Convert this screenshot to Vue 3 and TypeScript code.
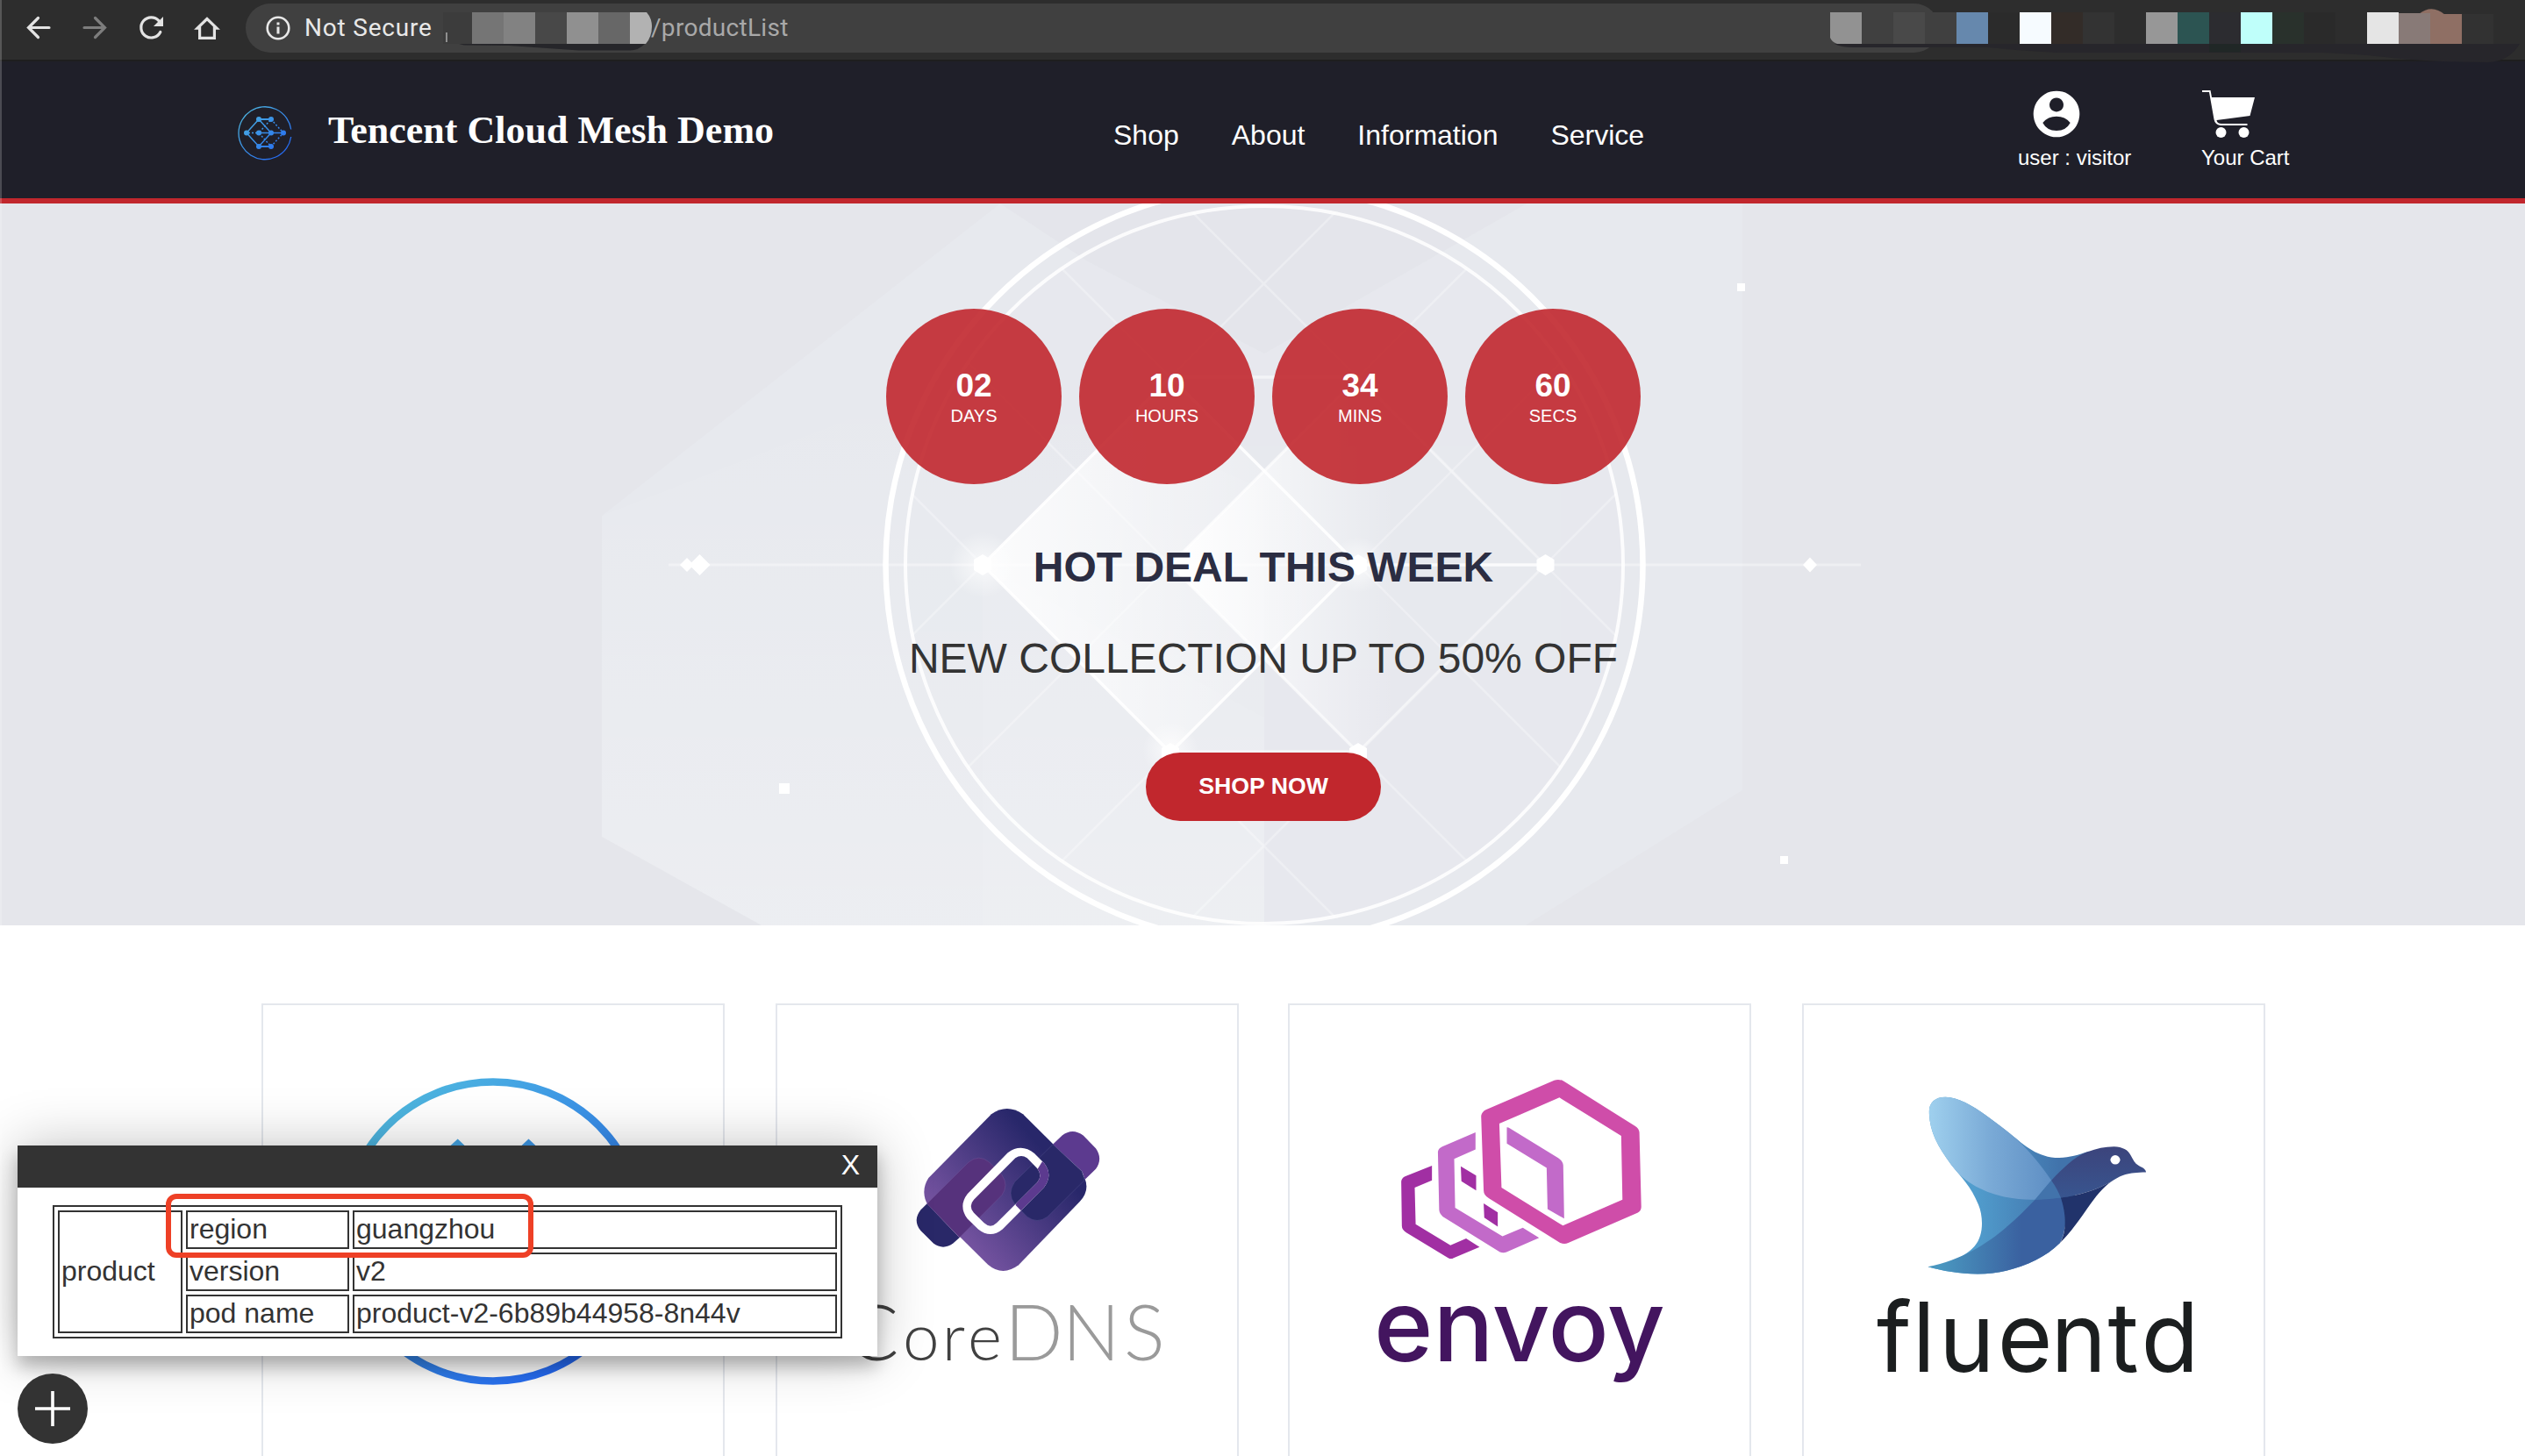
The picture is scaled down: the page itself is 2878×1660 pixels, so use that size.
<script setup lang="ts">
interface Swatch { x: number; color: string; y?: number }
interface Unit { value: string; label: string }

const addressMosaic: Swatch[] = [
  { x: 0, color: '#3c3c3c' },
  { x: 33, color: '#757575' },
  { x: 69, color: '#828282' },
  { x: 105, color: '#484848' },
  { x: 141, color: '#909090' },
  { x: 177, color: '#676767' },
]

const toolbarMosaic: Swatch[] = [
  { x: 108, color: '#404040' },
  { x: 72, color: '#494949' },
  { x: 144, color: '#6688ad' },
  { x: 180, color: '#2b2b2b' },
  { x: 216, color: '#f6fbff' },
  { x: 252, color: '#332c28' },
  { x: 288, color: '#333333' },
  { x: 360, color: '#979797' },
  { x: 396, color: '#2c5452' },
  { x: 432, color: '#2c2c30' },
  { x: 468, color: '#bffffa' },
  { x: 504, color: '#29312c' },
  { x: 540, color: '#2a2a2a' },
  { x: 612, color: '#e5e5e5' },
  { x: 648, color: '#887a77', y: 15 },
  { x: 684, color: '#8f6f64', y: 16 },
  { x: 720, color: '#323232', y: 16 },
]

const links: string[] = ['Shop', 'About', 'Information', 'Service']

const countdown: Unit[] = [
  { value: '02', label: 'DAYS' },
  { value: '10', label: 'HOURS' },
  { value: '34', label: 'MINS' },
  { value: '60', label: 'SECS' },
]

const gridNodes: number[] = [1120, 1334, 1548, 1761]
</script>

<template>
  <div class="screen">
    <div class="toolbar">
      <svg class="tool-icons" viewBox="0 0 280 68">
        <g fill="none" stroke-width="3.2" stroke-linecap="round">
          <path d="M56 31.5H33M43.5 20.5L32.5 31.5L43.5 42.5" stroke="#e3e3e3" />
          <path d="M96 31.5H119M108.5 20.5L119.5 31.5L108.5 42.5" stroke="#7d7d7d" />
          <path d="M181 23.6A11.6 11.6 0 1 0 182.8 36.5" stroke="#e3e3e3" />
          <path d="M236 21.5L225 32.2H227.6V43.4H244.4V32.2H247Z" stroke="#e3e3e3" stroke-linejoin="miter" />
        </g>
        <path d="M186 19V30H175Z" fill="#e3e3e3" />
      </svg>
      <div class="address">
        <svg class="info" viewBox="0 0 28 28">
          <circle cx="14" cy="14" r="12.3" fill="none" stroke="#e8e8e8" stroke-width="2.6" />
          <path d="M14 12.5V20.6M14 7.6V10.4" stroke="#e8e8e8" stroke-width="3" />
        </svg>
        <span class="not-secure">Not Secure</span>
        <svg class="mosaic" viewBox="0 0 240 56">
          <rect v-for="s in addressMosaic" :key="s.x" :x="s.x" y="10" width="36" height="36" :fill="s.color" />
          <path d="M4 33V44" stroke="#8f8f8f" stroke-width="2" />
          <path d="M213 10H232Q238 17 238 26Q238 38 231 46H213Z" fill="#b2b2b2" />
          <path d="M18 46H230Q222 54 212 53.500H155L75 48L24 47.500Z" fill="#26262a" />
        </svg>
        <span class="path">/productList</span>
      </div>
      <svg class="extensions" viewBox="0 0 792 72">
        <path d="M5 50Q12 54 26 54H180Q220 58 258 60H560Q610 62 640 66Q690 71 750 71Q774 70 786 50Z" fill="#27262b" />
        <rect x="432" y="50" width="36" height="9.500" fill="#202726" />
        <path d="M0 14H36V50H8Q2 48 0 43Z" fill="#929292" />
        <path d="M671 16Q686 4 701 17Z" fill="#8f6f64" />
        <rect v-for="s in toolbarMosaic" :key="s.x" :x="s.x" :y="s.y ?? 14" width="36" :height="50 - (s.y ?? 14)" :fill="s.color" />
      </svg>
    </div>

    <header class="site-header">
      <div class="brand">
        <svg class="brand-logo" viewBox="0 0 62 62">
          <defs>
            <linearGradient id="mesh-small" gradientUnits="userSpaceOnUse" x1="6" y1="6" x2="54" y2="54">
              <stop offset="0" stop-color="#4db4df" /><stop offset="1" stop-color="#2468f2" />
            </linearGradient>
          </defs>
          <g fill="none" stroke="url(#mesh-small)">
            <path d="M60.700 26.500A30 30 0 1 0 60.700 35" stroke-width="1.300" />
            <path d="M24 15.010L38 15M24 46.010L38 46" stroke-width="2" />
            <path d="M24 15L10 30.500L24 46L38 30.500ZM24 30.510L52 30.500" stroke-width="1.500" />
            <path d="M12 30.600L24 30.500M38 15L52 30.500L38 46L24 30.500Z" stroke-width="1.500" stroke-dasharray="2 2" />
          </g>
          <g fill="url(#mesh-small)">
            <circle cx="24" cy="15" r="3" /><circle cx="38" cy="15" r="3" />
            <circle cx="10" cy="30.500" r="3" /><circle cx="24" cy="30.500" r="3" />
            <circle cx="38" cy="30.500" r="3" /><circle cx="52" cy="30.500" r="3" />
            <circle cx="24" cy="46" r="3" /><circle cx="38" cy="46" r="3" />
          </g>
        </svg>
        <span class="brand-name">Tencent Cloud Mesh Demo</span>
      </div>
      <nav class="links">
        <a v-for="l in links" :key="l">{{ l }}</a>
      </nav>
      <div class="account">
        <div class="account-item user">
          <svg viewBox="0 0 60 60">
            <path fill-rule="evenodd" fill="#fff" d="M44 3.700A26.300 26.300 0 1 0 44.010 3.700ZM44 11.400A8 8 0 1 1 43.990 11.400ZM28.300 40Q34 32.700 44 32.700T59.700 40Q55 49 44 49T28.300 40Z" />
          </svg>
          <span>user : visitor</span>
        </div>
        <div class="account-item cart">
          <svg viewBox="0 0 62 60">
            <g fill="#fff">
              <path d="M1 3H10.500L12 11H61L55.500 32L17.500 37Q18 41 23 41H52.500V43H22Q15.500 42 14.500 36L9 5H1Z" />
              <circle cx="22.500" cy="51" r="6" /><circle cx="48.500" cy="51" r="6" />
            </g>
          </svg>
          <span>Your Cart</span>
        </div>
      </div>
    </header>

    <section class="hero">
      <svg class="hero-art" viewBox="0 234 2878 823">
        <defs>
          <clipPath id="ring-clip"><circle cx="1441" cy="646" r="409" /></clipPath>
          <linearGradient id="fade-left"><stop offset="0" stop-color="#fff" stop-opacity=".85" /><stop offset=".8" stop-color="#fff" stop-opacity=".15" /></linearGradient>
          <linearGradient id="fade-right"><stop offset="0" stop-color="#fff" stop-opacity=".95" /><stop offset=".6" stop-color="#fff" stop-opacity="0" /></linearGradient>
          <linearGradient id="edge-right" gradientUnits="userSpaceOnUse" x1="1334" y1="0" x2="1761" y2="0"><stop offset="0" stop-color="#fff" /><stop offset="1" stop-color="#fff" stop-opacity=".25" /></linearGradient>
          <linearGradient id="facet" x1="0" y1="0" x2="0" y2="1"><stop offset="0" stop-color="#fff" stop-opacity="0" /><stop offset="1" stop-color="#fff" stop-opacity=".22" /></linearGradient>
          <radialGradient id="glow"><stop offset="0" stop-color="#fff" stop-opacity=".7" /><stop offset="1" stop-color="#fff" stop-opacity="0" /></radialGradient>
        </defs>
        <path d="M686 590L1140 234H1740L1986 234V903L1739 1057H868L686 956Z" fill="#f1f3f9" opacity=".2" />
        <path d="M686 590L1120 420L1441 560V1057H868L686 956Z" fill="url(#facet)" />
        <path d="M1120 646L1441 820V1057H1120Z" fill="#fff" opacity=".07" />
        <path d="M1140 234L1240 300L1441 405L1740 234Z" fill="#e0e1e6" opacity=".45" />
        <path d="M762 646H2121" stroke="#fff" stroke-width="3" opacity=".38" />
        <g clip-path="url(#ring-clip)" stroke="#fff" stroke-width="2.500" opacity=".3">
          <path v-for="n in gridNodes" :key="n" :d="`M${n - 450} 196L${n + 450} 1096M${n - 450} 1096L${n + 450} 196`" />
        </g>
        <path d="M1120 646L1334 432L1548 646L1334 860Z" fill="url(#fade-left)" />
        <path d="M1334 646L1548 432L1761 646L1548 860Z" fill="url(#fade-right)" />
        <g fill="none" stroke="#fff" stroke-width="3.500">
          <path d="M1120 646L1334 432L1548 646L1334 860Z" opacity=".85" />
          <path d="M1334 646L1548 432L1761 646L1548 860Z" stroke="url(#edge-right)" opacity=".7" />
          <path d="M1334 432H1548M1334 859H1548" opacity=".5" />
          <path d="M1548 646H1761" opacity=".7" />
        </g>
        <circle cx="1120" cy="646" r="38" fill="url(#glow)" />
        <circle cx="1334" cy="857" r="32" fill="url(#glow)" />
        <circle cx="1548" cy="646" r="32" fill="url(#glow)" />
        <g fill="#fff">
          <path d="M783 638L791 646L783 654L775 646ZM797.500 634L809.500 646L797.500 658L785.500 646ZM2063 637.500L2071 646L2063 654.500L2055 646Z" />
          <path d="M1120 634L1130 640V652L1120 658L1110 652V640ZM1761.500 634L1771.500 640V652L1761.500 658L1751.500 652V640ZM1548 634L1558 640V652L1548 658L1538 652V640ZM1548 849L1558 855V867H1538V855ZM1334 849L1344 855V867H1324V855Z" />
          <rect x="888" y="895" width="12" height="12" /><rect x="1980" y="325" width="9" height="9" /><rect x="2029" y="978" width="9" height="9" />
        </g>
        <g fill="none" stroke="#fff">
          <circle cx="1441" cy="646" r="431.500" stroke-width="6.500" />
          <circle cx="1441" cy="646" r="409" stroke-width="4" opacity=".85" />
        </g>
      </svg>
      <div class="hero-content">
        <div class="countdown">
          <div v-for="u in countdown" :key="u.label" class="unit">
            <strong>{{ u.value }}</strong>
            <small>{{ u.label }}</small>
          </div>
        </div>
        <h2>HOT DEAL THIS WEEK</h2>
        <p>NEW COLLECTION UP TO 50% OFF</p>
        <a class="shop-now">SHOP NOW</a>
      </div>
    </section>

    <main class="products">
      <article class="card">
        <svg viewBox="300 1146 524 514">
          <defs>
            <linearGradient id="mesh-big" gradientUnits="userSpaceOnUse" x1="440" y1="1285" x2="680" y2="1525">
              <stop offset="0" stop-color="#4db4df" /><stop offset="1" stop-color="#2468f2" />
            </linearGradient>
          </defs>
          <circle cx="562" cy="1404" r="170.500" fill="none" stroke="url(#mesh-big)" stroke-width="8.600" />
          <path d="M521.700 1298.500L539 1315L521.700 1332L504 1315ZM602.500 1298.500L620 1315L602.500 1332L585 1315Z" fill="url(#mesh-big)" />
        </svg>
      </article>

      <article class="card">
        <svg viewBox="-222 47.300 1572 1520.700" preserveAspectRatio="none">
          <defs>
            <linearGradient id="dns-body" gradientUnits="userSpaceOnUse" x1="390" y1="800" x2="690" y2="540">
              <stop offset="0" stop-color="#73529f" /><stop offset="1" stop-color="#28276a" />
            </linearGradient>
            <clipPath id="dns-link"><path d="M720 517L850 640L702 761Q667 786 632 761L592 721Z" /></clipPath>
          </defs>
          <path d="M295 630L510 415Q563 378 618 415L815 608Q857 662 812 710L603 924Q548 964 498 922L293 722Q266 675 295 630Z" fill="url(#dns-body)" />
          <path d="M290 717L268 738Q240 773 268 808L311 850Q345 876 380 850L401 831Z" fill="#292868" />
          <path d="M290 717L432 577Q467 548 503 577L546 620Q570 655 546 688L401 831Z" fill="#56327c" stroke="#7d62a0" stroke-width="1" />
          <path d="M720 517L752 487Q787 460 824 487L867 530Q892 565 867 600L830 635L820 608Z" fill="#5c3a8f" />
          <path d="M720 517L820 608L828 638L702 761Q667 786 632 761L590 718Q562 683 590 643Z" fill="#292868" stroke="#61609a" stroke-width="1" />
          <path fill-rule="evenodd" fill="#fff" d="M566 545Q612 512 657 547L690 580Q722 620 690 662L548 803Q507 836 465 803L428 768Q396 725 428 684ZM592 563Q612 549 632 563L667 598Q686 622 667 645L528 782Q507 802 485 782L450 748Q430 725 450 703Z" />
          <g clip-path="url(#dns-link)">
            <path fill-rule="evenodd" fill="#5c3a8f" d="M566 545Q612 512 657 547L690 580Q722 620 690 662L548 803Q507 836 465 803L428 768Q396 725 428 684ZM592 563Q612 549 632 563L667 598Q686 622 667 645L528 782Q507 802 485 782L450 748Q430 725 450 703Z" />
          </g>
          <text class="dns" y="1245" fill="#414141"><tspan x="16" font-size="262">C</tspan><tspan x="207 341 429" font-size="224">ore</tspan></text>
          <text class="dns" x="556 752 963" y="1245" font-size="262" fill="#9a9a9a">DNS</text>
        </svg>
      </article>

      <article class="card">
        <svg viewBox="28 47.300 1467.200 1520.700" preserveAspectRatio="none">
          <path fill="#a12fa3" d="M482 589V638L427 663L430 786L541 857L591 834L634 863L551 900Q543 905 534 900L400 814Q386 805 386 792L384 642Q385 631 396 625ZM574 591L623 622V672L576 641ZM647 716L692 746V794L649 764Z" />
          <path fill="#c26ac9" d="M621 476V534L553 566L556 731L707 827L772 798L824 832L720 880Q710 884 699 880L523 765Q506 754 505 738L501 542Q502 530 515 524ZM721 459Q726 459 731 463L885 563Q900 573 901 588L904 767L851 735L848 596L721 514Z" />
          <path fill="#cf4da9" fill-rule="evenodd" d="M872 301Q888 295 903 304L1130 455Q1143 464 1144 476L1150 728Q1150 741 1138 748L917 849Q904 855 890 848L664 699Q647 688 647 672L639 422Q640 408 654 400ZM889 359L697 447L704 663L900 791L1090 703L1086 488Z" />
          <text class="envoy" x="297" y="1249" font-size="338" textLength="929" lengthAdjust="spacingAndGlyphs" fill="#43155f">envoy</text>
        </svg>
      </article>

      <article class="card">
        <svg viewBox="45 47.300 1467.200 1520.700" preserveAspectRatio="none">
          <defs>
            <linearGradient id="bird-base" gradientUnits="userSpaceOnUse" x1="590" y1="0" x2="860" y2="0"><stop offset="0" stop-color="#519dcd" /><stop offset="1" stop-color="#4173ab" /></linearGradient>
            <linearGradient id="bird-wing" gradientUnits="userSpaceOnUse" x1="445" y1="0" x2="835" y2="0"><stop offset="0" stop-color="#9fd0ee" /><stop offset=".5" stop-color="#7aaad6" /><stop offset="1" stop-color="#5f8fc4" /></linearGradient>
            <linearGradient id="bird-tail" gradientUnits="userSpaceOnUse" x1="480" y1="0" x2="740" y2="0"><stop offset="0" stop-color="#4a97c0" /><stop offset="1" stop-color="#3a61a0" /></linearGradient>
            <linearGradient id="bird-head" x1="0" y1="0" x2="0" y2="1"><stop offset="0" stop-color="#3c447c" /><stop offset="1" stop-color="#38558f" /></linearGradient>
          </defs>
          <path fill="url(#bird-base)" d="M445 405C445 375 465 357 497 357C560 357 640 430 705 482C750 520 790 562 860 562C895 562 920 552 955 541L862 850C800 915 700 953 600 954C540 953 490 945 441 930C520 920 570 885 590 860C620 825 618 760 602 720C580 660 545 625 515 585C470 520 445 470 445 405Z" />
          <path fill="url(#bird-wing)" d="M445 405C445 375 465 357 497 357C560 357 640 430 705 482C755 525 805 590 835 638L783 703C690 706 575 675 515 585C470 520 445 470 445 405Z" />
          <path fill="url(#bird-tail)" d="M441 930C600 895 700 795 783 703L865 697C882 750 885 810 862 850C800 915 700 953 600 954C540 953 490 945 441 930Z" />
          <path fill="#4273ab" d="M783 703L835 638Q856 670 865 697Q825 704 783 703Z" />
          <path fill="url(#bird-head)" d="M835 638C870 600 905 560 950 542C980 530 1005 524 1035 524C1062 525 1080 535 1088 553C1105 588 1108 583 1125 595Q1137 603 1137 611C1080 611 1055 622 1030 640C980 672 920 690 865 697Q856 670 835 638Z" />
          <path fill="#21336b" d="M865 697C920 690 980 672 1030 640C970 680 935 775 862 850C885 815 882 750 865 697Z" />
          <circle cx="1039" cy="569" r="15.500" fill="#fff" />
          <text class="fluentd" transform="scale(.93 1)" x="298 421 512 713 896 1092 1206" y="1283" font-size="324" fill="#1b1e1f">fluentd</text>
        </svg>
      </article>
    </main>

    <div class="popup">
      <div class="popup-bar"><span>X</span></div>
      <table border="1">
        <colgroup><col class="c1" /><col class="c2" /><col class="c3" /></colgroup>
        <tbody>
          <tr><td rowspan="3">product</td><td>region</td><td>guangzhou</td></tr>
          <tr><td>version</td><td>v2</td></tr>
          <tr><td>pod name</td><td>product-v2-6b89b44958-8n44v</td></tr>
        </tbody>
      </table>
      <div class="marker"></div>
    </div>
    <button class="fab">
      <svg viewBox="0 0 40 40"><path d="M20 0V40M0 20H40" stroke="#fff" stroke-width="3.600" /></svg>
    </button>
    <div class="window-edge"></div>
  </div>
</template>

<style>
body { margin: 0; }
</style>

<style scoped>
.screen {
  position: relative;
  width: 2878px;
  height: 1660px;
  overflow: hidden;
  background: #fff;
  font-family: "Liberation Sans", Arial, sans-serif;
  color: #333;
}
.toolbar {
  position: relative;
  display: flex;
  height: 70px;
  box-sizing: border-box;
  border-bottom: 2px solid #1e1e1f;
  background: #2d2d2d;
}
.tool-icons { width: 280px; height: 68px; }
.address {
  display: flex;
  align-items: center;
  width: 1930px;
  height: 56px;
  margin-top: 4px;
  border-radius: 28px;
  background: #404040;
  font: 28px/56px Roboto, sans-serif;
  color: #e8e8e8;
}
.info { width: 28px; height: 28px; margin-left: 22.500px; }
.not-secure { width: 158px; margin-left: 16.500px; letter-spacing: .8px; white-space: nowrap; }
.mosaic { width: 240px; height: 56px; }
.path { margin-left: -3px; letter-spacing: .3px; color: #a9a9a9; }
.extensions {
  position: absolute;
  z-index: 1;
  left: 2086px;
  top: 0;
  width: 792px;
  height: 72px;
}
.site-header {
  display: flex;
  align-items: flex-start;
  height: 162px;
  box-sizing: border-box;
  padding: 0 269px 0 271px;
  border-bottom: 6px solid #c1272d;
  background: #1f1f29;
  color: #fff;
}
.brand { display: flex; width: 998px; }
.brand-logo { width: 62px; height: 62px; margin-top: 51px; }
.brand-name {
  margin: 54px 0 0 41px;
  font: bold 44px/50px "Liberation Serif", "Times New Roman", serif;
  white-space: nowrap;
}
.links { display: flex; gap: 60px; margin-top: 66px; font-size: 32px; line-height: 36px; }
.account { display: flex; margin: 30px 0 0 auto; }
.account-item { display: flex; flex-direction: column; font-size: 24px; line-height: 28px; white-space: nowrap; }
.account-item svg { display: block; height: 60px; margin-bottom: 6px; overflow: visible; }
.user { width: 209px; }
.user svg { width: 60px; }
.cart { width: 100px; }
.cart svg { width: 62px; }
.hero { position: relative; height: 823px; background: #e5e6eb; }
.hero-art { position: absolute; inset: 0; width: 2878px; height: 823px; }
.hero-content {
  position: relative;
  display: flex;
  flex-direction: column;
  align-items: center;
  padding: 120px 0 0 2px;
}
.countdown { display: flex; gap: 20px; }
.unit {
  display: flex;
  flex-direction: column;
  align-items: center;
  width: 200px;
  height: 200px;
  box-sizing: border-box;
  padding-top: 70px;
  border-radius: 50%;
  background: rgba(193, 39, 45, .9);
  color: #fff;
}
.unit strong { font-size: 37px; line-height: 36px; }
.unit small { margin-top: 6px; font-size: 20px; line-height: 20px; }
h2 { margin: 69px 0 0; font-size: 48px; line-height: 52px; color: #2b2d42; }
p { margin: 52px 0 0; font-size: 48px; line-height: 52px; }
.shop-now {
  width: 268px;
  height: 78px;
  margin-top: 81px;
  border-radius: 39px;
  background: #c1272d;
  color: #fff;
  font-size: 26.670px;
  font-weight: bold;
  line-height: 77px;
  text-align: center;
}
.products {
  display: flex;
  gap: 58px;
  width: 2284px;
  padding: 89px 0 0 298px;
}
.card { flex: none; width: 528px; height: 600px; border: 2px solid #e4e7ed; box-sizing: border-box; }
.card:nth-child(3) { margin-left: -2px; }
.card svg { display: block; width: 524px; height: 514px; }
.dns { font-family: Lato, sans-serif; font-weight: 300; }
.envoy { font-family: Inter, sans-serif; font-weight: 500; }
.fluentd { font-family: Inter, sans-serif; font-weight: 400; }
.popup {
  position: absolute;
  left: 20px;
  top: 1306px;
  width: 980px;
  height: 240px;
  background: #fff;
  box-shadow: 0 12px 18px rgba(0, 0, 0, .24), 0 0 60px rgba(0, 0, 0, .24);
}
.popup-bar {
  height: 48px;
  padding-right: 20px;
  background: #333;
  color: #fff;
  font-size: 32px;
  line-height: 45px;
  text-align: right;
}
table {
  width: 900px;
  height: 152px;
  margin: 20px 0 0 40px;
  table-layout: fixed;
  border: 2px solid #333;
  border-collapse: separate;
  border-spacing: 4px;
  font-size: 32px;
  line-height: 36px;
}
td { height: 36px; padding: 1px 2px 3px; border: 2px solid #333; white-space: nowrap; }
.c1 { width: 142px; }
.c2 { width: 186px; }
.c3 { width: 552px; }
.marker {
  position: absolute;
  left: 169px;
  top: 55px;
  width: 407px;
  height: 61px;
  border: 6px solid #ee4026;
  border-radius: 12px;
}
.fab {
  position: absolute;
  left: 20px;
  top: 1566px;
  display: flex;
  align-items: center;
  justify-content: center;
  width: 80px;
  height: 80px;
  padding: 0;
  border: 0;
  border-radius: 50%;
  background: #333;
}
.fab svg { width: 40px; height: 40px; }
.window-edge {
  position: absolute;
  left: 0;
  top: 0;
  width: 2px;
  height: 1660px;
  background: rgba(255, 255, 255, .2);
}
</style>
